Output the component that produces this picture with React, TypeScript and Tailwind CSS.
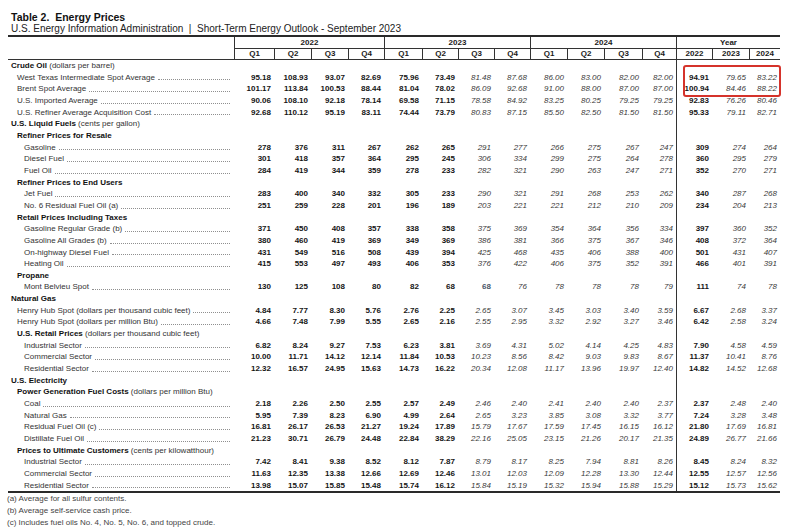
import React from "react";

type Section = { kind: "section"; bold: string; rest?: string; level: 0 | 1 };
type Data = { kind: "data"; label: string; level: 1 | 2; v: string };
type Row = Section | Data;

const rows: Row[] = [
  { kind: "section", bold: "Crude Oil", rest: " (dollars per barrel)", level: 0 },
  { kind: "data", level: 1, label: "West Texas Intermediate Spot Average", v: "95.18 108.93 93.07 82.69 75.96 73.49 81.48 87.68 86.00 83.00 82.00 82.00 94.91 79.65 83.22" },
  { kind: "data", level: 1, label: "Brent Spot Average", v: "101.17 113.84 100.53 88.44 81.04 78.02 86.09 92.68 91.00 88.00 87.00 87.00 100.94 84.46 88.22" },
  { kind: "data", level: 1, label: "U.S. Imported Average", v: "90.06 108.10 92.18 78.14 69.58 71.15 78.58 84.92 83.25 80.25 79.25 79.25 92.83 76.26 80.46" },
  { kind: "data", level: 1, label: "U.S. Refiner Average Acquisition Cost", v: "92.68 110.12 95.19 83.11 74.44 73.79 80.83 87.15 85.50 82.50 81.50 81.50 95.33 79.11 82.71" },
  { kind: "section", bold: "U.S. Liquid Fuels", rest: " (cents per gallon)", level: 0 },
  { kind: "section", bold: "Refiner Prices for Resale", level: 1 },
  { kind: "data", level: 2, label: "Gasoline", v: "278 376 311 267 262 265 291 277 266 275 267 247 309 274 264" },
  { kind: "data", level: 2, label: "Diesel Fuel", v: "301 418 357 364 295 245 306 334 299 275 264 278 360 295 279" },
  { kind: "data", level: 2, label: "Fuel Oil", v: "284 419 344 359 278 233 282 321 290 263 247 271 352 270 271" },
  { kind: "section", bold: "Refiner Prices to End Users", level: 1 },
  { kind: "data", level: 2, label: "Jet Fuel", v: "283 400 340 332 305 233 290 321 291 268 253 262 340 287 268" },
  { kind: "data", level: 2, label: "No. 6 Residual Fuel Oil (a)", v: "251 259 228 201 196 189 203 221 221 212 210 209 234 204 213" },
  { kind: "section", bold: "Retail Prices Including Taxes", level: 1 },
  { kind: "data", level: 2, label: "Gasoline Regular Grade (b)", v: "371 450 408 357 338 358 375 369 354 364 356 334 397 360 352" },
  { kind: "data", level: 2, label: "Gasoline All Grades (b)", v: "380 460 419 369 349 369 386 381 366 375 367 346 408 372 364" },
  { kind: "data", level: 2, label: "On-highway Diesel Fuel", v: "431 549 516 508 439 394 425 468 435 406 388 400 501 431 407" },
  { kind: "data", level: 2, label: "Heating Oil", v: "415 553 497 493 406 353 376 422 406 375 352 391 466 401 391" },
  { kind: "section", bold: "Propane", level: 1 },
  { kind: "data", level: 2, label: "Mont Belvieu Spot", v: "130 125 108 80 82 68 68 76 78 78 78 79 111 74 78" },
  { kind: "section", bold: "Natural Gas", level: 0 },
  { kind: "data", level: 1, label: "Henry Hub Spot (dollars per thousand cubic feet)", v: "4.84 7.77 8.30 5.76 2.76 2.25 2.65 3.07 3.45 3.03 3.40 3.59 6.67 2.68 3.37" },
  { kind: "data", level: 1, label: "Henry Hub Spot (dollars per million Btu)", v: "4.66 7.48 7.99 5.55 2.65 2.16 2.55 2.95 3.32 2.92 3.27 3.46 6.42 2.58 3.24" },
  { kind: "section", bold: "U.S. Retail Prices", rest: " (dollars per thousand cubic feet)", level: 1 },
  { kind: "data", level: 2, label: "Industrial Sector", v: "6.82 8.24 9.27 7.53 6.23 3.81 3.69 4.31 5.02 4.14 4.25 4.83 7.90 4.58 4.59" },
  { kind: "data", level: 2, label: "Commercial Sector", v: "10.00 11.71 14.12 12.14 11.84 10.53 10.23 8.56 8.42 9.03 9.83 8.67 11.37 10.41 8.76" },
  { kind: "data", level: 2, label: "Residential Sector", v: "12.32 16.57 24.95 15.63 14.73 16.22 20.34 12.08 11.17 13.96 19.97 12.40 14.82 14.52 12.68" },
  { kind: "section", bold: "U.S. Electricity", level: 0 },
  { kind: "section", bold: "Power Generation Fuel Costs", rest: " (dollars per million Btu)", level: 1 },
  { kind: "data", level: 2, label: "Coal", v: "2.18 2.26 2.50 2.55 2.57 2.49 2.46 2.40 2.41 2.40 2.40 2.37 2.37 2.48 2.40" },
  { kind: "data", level: 2, label: "Natural Gas", v: "5.95 7.39 8.23 6.90 4.99 2.64 2.65 3.23 3.85 3.08 3.32 3.77 7.24 3.28 3.48" },
  { kind: "data", level: 2, label: "Residual Fuel Oil (c)", v: "16.81 26.17 26.53 21.27 19.24 17.89 15.79 17.67 17.59 17.45 16.15 16.12 21.80 17.69 16.81" },
  { kind: "data", level: 2, label: "Distillate Fuel Oil", v: "21.23 30.71 26.79 24.48 22.84 38.29 22.16 25.05 23.15 21.26 20.17 21.35 24.89 26.77 21.66" },
  { kind: "section", bold: "Prices to Ultimate Customers", rest: " (cents per kilowatthour)", level: 1 },
  { kind: "data", level: 2, label: "Industrial Sector", v: "7.42 8.41 9.38 8.52 8.12 7.87 8.79 8.17 8.25 7.94 8.81 8.26 8.45 8.24 8.32" },
  { kind: "data", level: 2, label: "Commercial Sector", v: "11.63 12.35 13.38 12.66 12.69 12.46 13.01 12.03 12.09 12.28 13.30 12.44 12.55 12.57 12.56" },
  { kind: "data", level: 2, label: "Residential Sector", v: "13.98 15.07 15.85 15.48 15.74 16.12 15.84 15.19 15.32 15.94 15.88 15.29 15.12 15.73 15.62" },
];

const GRID =
  "grid grid-cols-[226px_40px_37px_37px_36px_38px_36px_36px_36px_37px_37px_38px_34px_36px_37px_31px]";

function cellClass(i: number, label: string) {
  const special = label === "Mont Belvieu Spot" && i === 6;
  const hist = i < 6 || i === 12;
  let cls = "text-right pr-[3px] whitespace-nowrap ";
  if (i === 12) cls += "border-l border-[#333] ";
  if (special) cls += "font-bold text-[#4a5868]";
  else if (hist) cls += "font-bold text-[#151515]";
  else cls += "italic text-[#3a3a3a]";
  return cls;
}

export default function App() {
  return (
    <div className="w-[800px] h-[531px] bg-white overflow-hidden relative font-['Liberation_Sans',Arial,sans-serif] text-[#222]">
      <div className="px-[8px] w-[788px]">
        <div className="mt-[11px] ml-[3px] h-[12px] leading-[12px] text-[10.5px] font-bold text-[#111]">
          Table 2.&nbsp; Energy Prices
        </div>
        <div className="ml-[3px] h-[12px] leading-[12px] text-[10px] text-[#222] whitespace-nowrap">
          U.S. Energy Information Administration&nbsp; |&nbsp; Short-Term Energy Outlook - September 2023
        </div>
        <div className="h-[2px] bg-[#2a2a2a]" />

        {/* header */}
        <div className={GRID + " text-[8px] font-bold text-[#1a1a1a] leading-[11px]"}>
          <div className="h-[12px]" />
          <div className="col-span-4 border-l border-b border-[#333] text-center h-[12px]">2022</div>
          <div className="col-span-4 border-l border-b border-[#333] text-center h-[12px]">2023</div>
          <div className="col-span-4 border-l border-b border-[#333] text-center h-[12px]">2024</div>
          <div className="col-span-3 border-l border-b border-[#333] text-center h-[12px]">Year</div>

          <div className="h-[11px] border-b border-[#333]" />
          {["Q1", "Q2", "Q3", "Q4", "Q1", "Q2", "Q3", "Q4", "Q1", "Q2", "Q3", "Q4", "2022", "2023", "2024"].map((q, i) => (
            <div key={i} className="h-[11px] border-l border-b border-[#333] text-center leading-[10px]">
              {q}
            </div>
          ))}
        </div>

        {/* body */}
        <div className={GRID + " auto-rows-[11.67px] text-[8px] leading-[11.67px]"}>
          {rows.map((r, ri) => {
            const pl = r.level === 0 ? "pl-[3px]" : r.level === 1 ? "pl-[9px]" : "pl-[16px]";
            const label =
              r.kind === "section" ? (
                <div key={"l" + ri} className={"whitespace-nowrap " + pl}>
                  <span className="font-bold text-[#111]">{r.bold}</span>
                  {r.rest && <span className="text-[#333]">{r.rest}</span>}
                </div>
              ) : (
                <div key={"l" + ri} className={"flex min-w-0 pr-[4px] " + pl}>
                  <span className="whitespace-nowrap text-[#333]">{r.label}</span>
                  <span className="flex-1 min-w-0 self-end ml-[3px] mb-[3px] h-[1px] border-b border-dotted border-[#8f8f8f]" />
                </div>
              );
            const vals = r.kind === "data" ? r.v.split(" ") : Array(15).fill("");
            return (
              <React.Fragment key={ri}>
                {label}
                {vals.map((v, i) => (
                  <div key={i} className={cellClass(i, r.kind === "data" ? r.label : "")}>
                    {v}
                  </div>
                ))}
              </React.Fragment>
            );
          })}
        </div>
        <div className="h-[2px] bg-[#2a2a2a]" />

        <div className="text-[8px] leading-[11.67px] text-[#444] -ml-[1px]">
          <div>(a) Average for all sulfur contents.</div>
          <div>(b) Average self-service cash price.</div>
          <div>(c) Includes fuel oils No. 4, No. 5, No. 6, and topped crude.</div>
        </div>
      </div>

      <div className="absolute left-[683px] top-[65px] w-[98px] h-[32px] border-2 border-[#d5332b] rounded-[3px] pointer-events-none" />
    </div>
  );
}
